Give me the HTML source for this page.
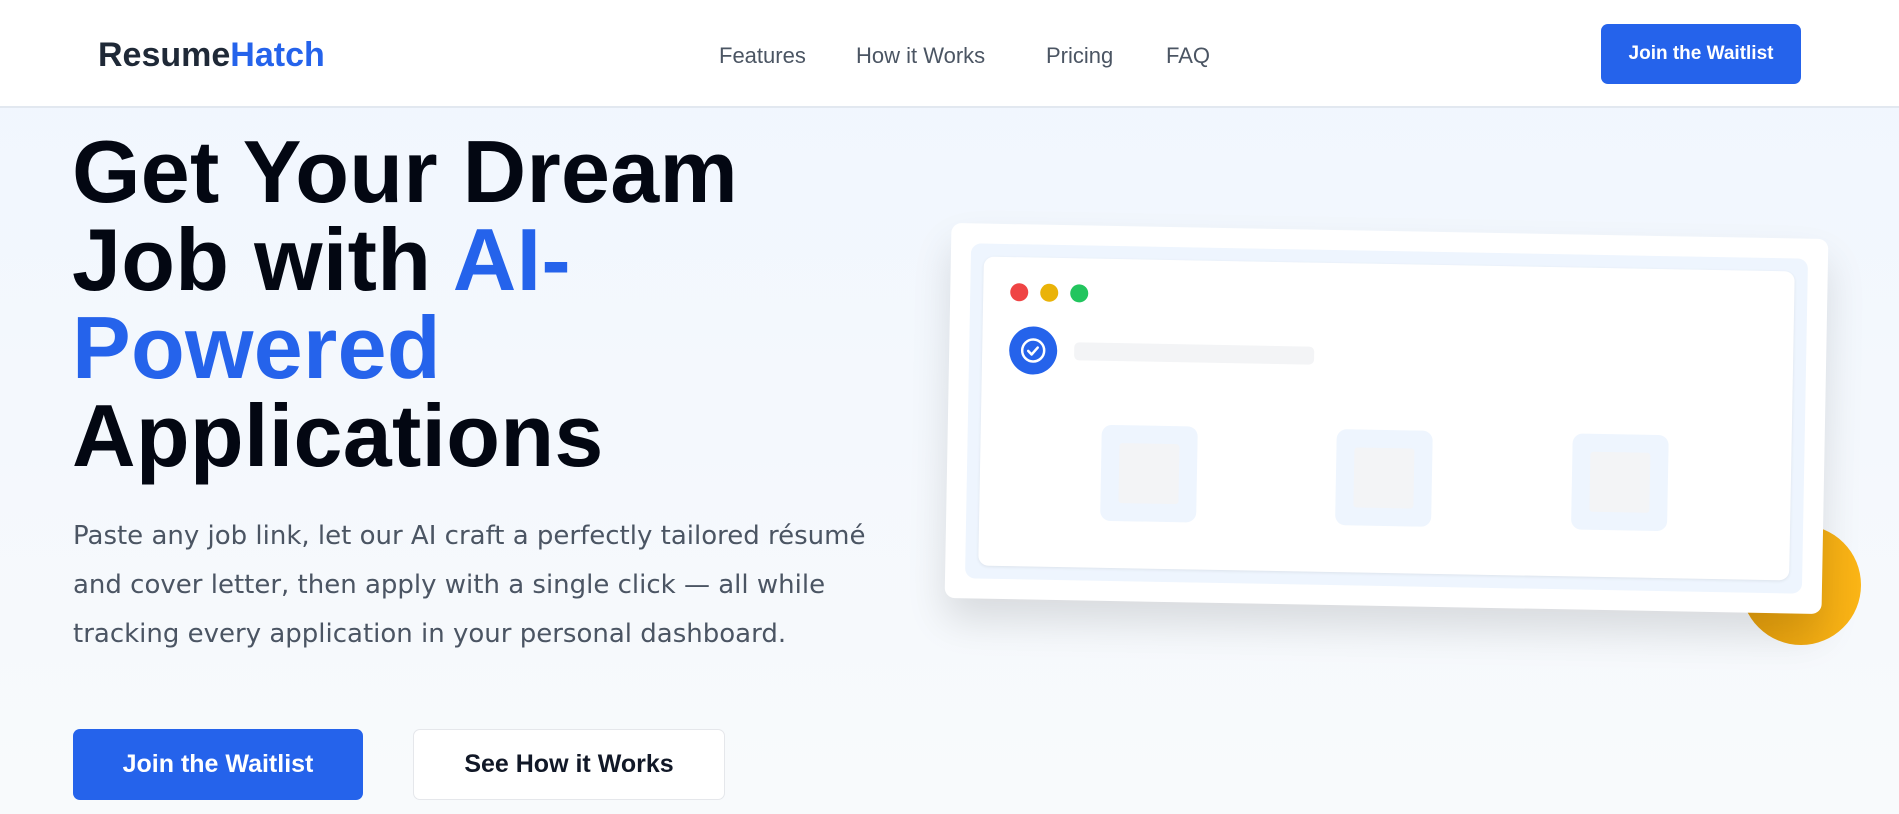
<!DOCTYPE html>
<html><head><meta charset="utf-8"><style>
*{margin:0;padding:0;box-sizing:border-box}
html,body{width:1899px;height:814px;overflow:hidden}
body{font-family:"Liberation Sans","DejaVu Sans",sans-serif;background:linear-gradient(180deg,#f0f6fe 0%,#f8fafc 100%);position:relative}
header{position:absolute;left:0;top:0;width:1899px;height:108px;background:#fff;border-bottom:2px solid #e2e8f0}
.logo{position:absolute;left:98px;top:36px;font-size:34px;font-weight:bold;color:#1f2937}
.logo span{color:#2563eb}
.nav a{position:absolute;top:43px;font-size:22px;color:#4b5563;text-decoration:none}
.btn{position:absolute;background:#2563eb;color:#fff;border-radius:7px;font-weight:bold;display:flex;align-items:center;justify-content:center}
h1{position:absolute;left:72px;top:128px;font-size:88px;line-height:88px;font-weight:bold;color:#030712;letter-spacing:0.3px;width:820px}
h1 span{color:#2563eb}
p{position:absolute;left:73px;top:512px;width:830px;font-family:"DejaVu Sans",sans-serif;font-size:26px;line-height:49px;color:#4b5563}
.b2{position:absolute;left:413px;top:729px;width:312px;height:71px;background:#fff;border:1px solid #e5e7eb;border-radius:7px;font-size:25px;font-weight:bold;color:#111827;display:flex;align-items:center;justify-content:center}
.sun{position:absolute;left:1741px;top:525px;width:120px;height:120px;border-radius:50%;background:linear-gradient(90deg,#e39d0c,#fbb516)}
.card{position:absolute;left:948px;top:231px;width:877px;height:375px;background:#fff;border-radius:10px;transform:rotate(1.05deg);box-shadow:0 22px 40px rgba(0,0,0,.12)}
.panel{position:absolute;left:20px;top:20px;right:20px;bottom:20px;background:#eef5fe;border-radius:10px}
.inner{position:absolute;left:33px;top:33px;right:33px;bottom:33px;background:#fff;border-radius:10px;box-shadow:0 1px 3px rgba(0,0,0,.08)}
.dot{position:absolute;width:18px;height:18px;border-radius:50%;top:59px}
.chk{position:absolute;left:60px;top:102px;width:48px;height:48px;border-radius:50%;background:#2563eb}
.bar{position:absolute;left:125px;top:117px;width:240px;height:18px;background:#f3f4f6;border-radius:5px}
.sq{position:absolute;width:96px;height:96px;top:199px;background:#eef5fe;border-radius:10px}
.sq i{position:absolute;left:18px;top:18px;width:60px;height:60px;background:#f3f4f6;border-radius:3px}
</style></head><body>
<header>
<div class="logo">Resume<span>Hatch</span></div>
<div class="nav"><a style="left:719px">Features</a><a style="left:856px">How it Works</a><a style="left:1046px">Pricing</a><a style="left:1166px">FAQ</a></div>
<div class="btn" style="left:1601px;top:24px;width:200px;height:60px;font-size:19px">Join the Waitlist</div>
</header>
<h1>Get Your Dream Job with <span>AI-Powered</span> Applications</h1>
<p>Paste any job link, let our AI craft a perfectly tailored résumé and cover letter, then apply with a single click — all while tracking every application in your personal dashboard.</p>
<div class="btn" style="left:73px;top:729px;width:290px;height:71px;font-size:25px">Join the Waitlist</div>
<div class="b2">See How it Works</div>
<div class="sun"></div>
<div class="card"><div class="panel"></div><div class="inner"></div>
<div class="dot" style="left:60px;background:#ef4444"></div>
<div class="dot" style="left:90px;background:#eab308"></div>
<div class="dot" style="left:120px;background:#22c55e"></div>
<div class="chk"><svg width="48" height="48" viewBox="0 0 48 48"><circle cx="24" cy="24" r="11" fill="none" stroke="#fff" stroke-width="2.5"/><path d="M19 24.5l3.5 3.5 6-7" fill="none" stroke="#fff" stroke-width="2.5" stroke-linecap="round" stroke-linejoin="round"/></svg></div>
<div class="bar"></div>
<div class="sq" style="left:154px"><i></i></div>
<div class="sq" style="left:389px"><i></i></div>
<div class="sq" style="left:625px"><i></i></div>
</div>
</body></html>
